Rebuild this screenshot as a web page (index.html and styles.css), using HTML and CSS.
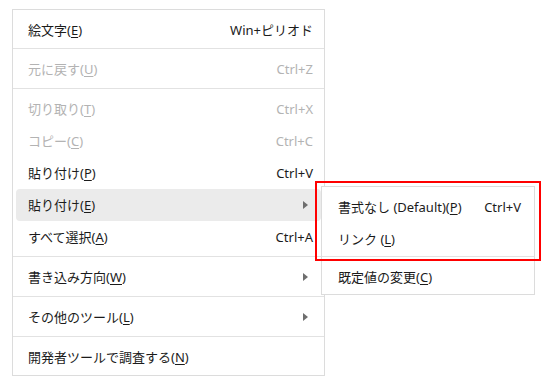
FILE: index.html
```html
<!DOCTYPE html>
<html lang="ja">
<head>
<meta charset="utf-8">
<link rel="stylesheet" href="styles.css">
</head>
<body>
<div class="menu main">
  <div class="group first">
    <div class="item"><span>絵文字(<u>E</u>)</span><span class="key">Win+ピリオド</span></div>
  </div>
  <div class="group">
    <div class="item disabled"><span>元に戻す(<u>U</u>)</span><span class="key">Ctrl+Z</span></div>
  </div>
  <div class="group">
    <div class="item disabled"><span>切り取り(<u>T</u>)</span><span class="key">Ctrl+X</span></div>
    <div class="item disabled"><span>コピー(<u>C</u>)</span><span class="key">Ctrl+C</span></div>
    <div class="item"><span>貼り付け(<u>P</u>)</span><span class="key">Ctrl+V</span></div>
    <div class="item active"><span>貼り付け(<u>E</u>)</span><span class="arrow"></span></div>
    <div class="item"><span>すべて選択(<u>A</u>)</span><span class="key">Ctrl+A</span></div>
  </div>
  <div class="group">
    <div class="item"><span>書き込み方向(<u>W</u>)</span><span class="arrow"></span></div>
  </div>
  <div class="group">
    <div class="item"><span>その他のツール(<u>L</u>)</span><span class="arrow"></span></div>
  </div>
  <div class="group last">
    <div class="item"><span>開発者ツールで調査する(<u>N</u>)</span></div>
  </div>
</div>

<div class="menu sub">
  <div class="group first">
    <div class="item"><span>書式なし (Default)(<u>P</u>)</span><span class="key">Ctrl+V</span></div>
    <div class="item"><span>リンク (<u>L</u>)</span></div>
  </div>
  <div class="group">
    <div class="item"><span>既定値の変更(<u>C</u>)</span></div>
  </div>
</div>

<div class="highlight-box"></div>
</body>
</html>
```

FILE: styles.css
```css
html, body {
  margin: 0;
  padding: 0;
  background: #ffffff;
}

body {
  position: relative;
  width: 550px;
  height: 386px;
  overflow: hidden;
  font-family: "Noto Sans", "Noto Sans CJK JP", sans-serif;
  font-size: 13px;
  color: #1b1b1b;
}

.menu {
  background: #ffffff;
  border: 1px solid #dcdcdc;
  box-sizing: border-box;
}

.main {
  margin: 9px 0 0 12px;
  width: 313px;
}

.group {
  padding: 4px 0 3px;
  border-top: 1px solid #e2e2e2;
}

.group.first {
  border-top: none;
}

.main .group.first {
  padding: 4px 0 2px;
}

.main .group.last {
  padding-bottom: 2px;
}

.item {
  display: flex;
  align-items: center;
  justify-content: space-between;
  height: 32px;
  line-height: 32px;
  margin: 0 3px;
  padding: 0 8px 0 12px;
  border-radius: 4px;
  white-space: nowrap;
}

.item u {
  text-decoration: underline;
  text-underline-offset: 2px;
  text-decoration-thickness: 1px;
}

.item.disabled {
  color: #b3b3b3;
}

.item.active {
  background: #ebebeb;
}

.arrow {
  width: 0;
  height: 0;
  margin-right: 5px;
  border-top: 4px solid transparent;
  border-bottom: 4px solid transparent;
  border-left: 5px solid #6e6e6e;
}

.sub {
  position: absolute;
  left: 321px;
  top: 186px;
  width: 214px;
}

.sub .group {
  padding: 4px 0 1px;
}

.sub .item {
  padding: 0 10px 0 13px;
}

.highlight-box {
  position: absolute;
  left: 315px;
  top: 181px;
  width: 226px;
  height: 80px;
  box-sizing: border-box;
  border: 2px solid #ff0000;
}
```
